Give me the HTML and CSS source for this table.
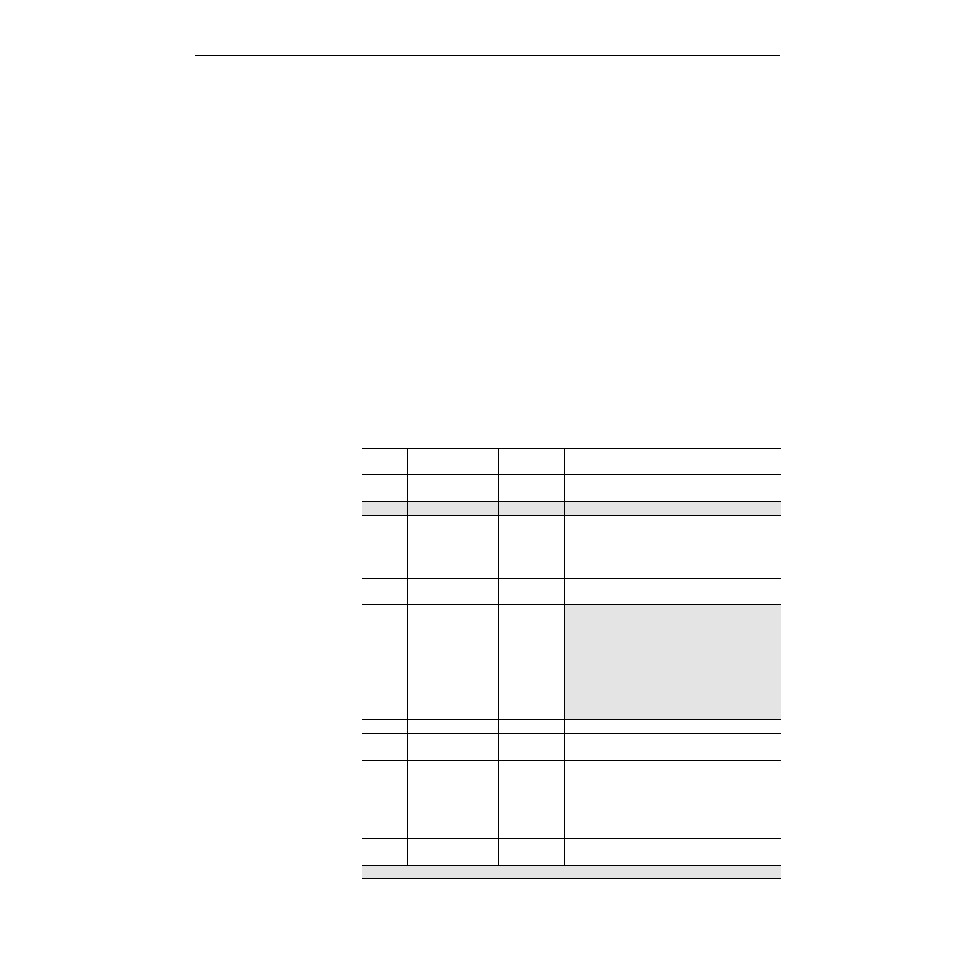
FILE: index.html
```html
<!DOCTYPE html>
<html>
<head>
<meta charset="utf-8">
<link rel="stylesheet" href="styles.css">
</head>
<body>
<div class="page">
  <div class="rule"></div>
  <table class="grid">
    <colgroup>
      <col class="c1"><col class="c2"><col class="c3"><col class="c4">
    </colgroup>
    <tr class="h26"><td></td><td></td><td></td><td></td></tr>
    <tr class="h27"><td></td><td></td><td></td><td></td></tr>
    <tr class="h14 shade"><td></td><td></td><td></td><td></td></tr>
    <tr class="h63"><td></td><td></td><td></td><td></td></tr>
    <tr class="h26"><td></td><td></td><td></td><td></td></tr>
    <tr class="h115"><td></td><td></td><td></td><td class="shade"></td></tr>
    <tr class="h14"><td></td><td></td><td></td><td></td></tr>
    <tr class="h27"><td></td><td></td><td></td><td></td></tr>
    <tr class="h78"><td></td><td></td><td></td><td></td></tr>
    <tr class="h27"><td></td><td></td><td></td><td></td></tr>
    <tr class="h14 shade last"><td colspan="4"></td></tr>
  </table>
</div>
</body>
</html>
```
FILE: styles.css
```css
html, body {
  margin: 0;
  padding: 0;
  background: #fff;
  font-family: "Liberation Serif", serif;
}
.page {
  padding-top: 55px;
  width: 954px;
  height: 954px;
  box-sizing: border-box;
}
.rule {
  margin-left: 195px;
  width: 585px;
  border-top: 1px solid #000;
}
.grid {
  margin-top: 392px;
  margin-left: 362px;
  width: 419px;
  table-layout: fixed;
  border-collapse: separate;
  border-spacing: 0;
}
.c1 { width: 45px; }
.c2 { width: 91px; }
.c3 { width: 66px; }
.c4 { width: 217px; }
.grid td {
  padding: 0;
  border-top: 1px solid #000;
  box-sizing: border-box;
}
.grid td + td {
  border-left: 1px solid #000;
}
.grid tr.last td {
  border-bottom: 1px solid #000;
}
.shade td, td.shade { background: #e4e4e4; }
.h14 { height: 14px; }
.h26 { height: 26px; }
.h27 { height: 27px; }
.h63 { height: 63px; }
.h78 { height: 78px; }
.h115 { height: 115px; }
```
